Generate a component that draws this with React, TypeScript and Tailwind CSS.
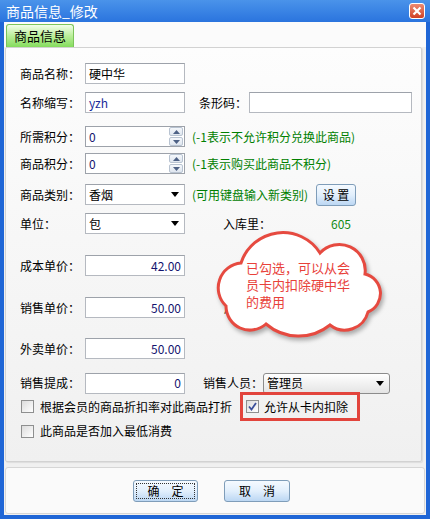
import React from 'react';

const font = { fontFamily: '"Noto Sans CJK SC", "Noto Sans", sans-serif' };

function TextBox({ value = '', right = false, w = 'w-[100px]', tone = 'text-black' }: { value?: string; right?: boolean; w?: string; tone?: string }) {
  return (
    <div
      className={`${w} h-[21px] bg-white border border-[#b5b9c0] border-t-[#9da2aa] flex items-center px-[3px] text-[12px] whitespace-nowrap ${tone} ${right ? 'justify-end' : ''}`}
    >
      {value}
    </div>
  );
}

function SpinBox({ value }: { value: string }) {
  return (
    <div className="w-[100px] h-[21px] bg-white border border-[#9da2aa] flex items-center text-[12px] text-[#14146e]">
      <span className="flex-1 pl-[3px]">{value}</span>
      <div className="w-[14px] h-[19px] flex flex-col gap-[1px] mr-[1px]">
        <div className="flex-1 bg-linear-to-b from-[#f4f7fb] to-[#dfe6ef] border border-[#b8c3d1] rounded-[2px] flex items-center justify-center">
          <svg width="7" height="4" viewBox="0 0 7 4"><path d="M3.5 0 L7 4 L0 4 Z" fill="#4d6185" /></svg>
        </div>
        <div className="flex-1 bg-linear-to-b from-[#f4f7fb] to-[#dfe6ef] border border-[#b8c3d1] rounded-[2px] flex items-center justify-center">
          <svg width="7" height="4" viewBox="0 0 7 4"><path d="M0 0 L7 0 L3.5 4 Z" fill="#4d6185" /></svg>
        </div>
      </div>
    </div>
  );
}

function ComboBox({ value, w = 'w-[100px]', fancy = false }: { value: string; w?: string; fancy?: boolean }) {
  return (
    <div
      className={`${w} h-[21px] flex items-center text-[12px] text-black pl-[3px] pr-[5px] whitespace-nowrap ${
        fancy
          ? 'bg-linear-to-b from-white to-[#e4e4e4] border border-[#8c8c8c] rounded-[3px]'
          : 'bg-white border border-[#b5b9c0] border-t-[#9da2aa]'
      }`}
    >
      <span className="flex-1">{value}</span>
      <svg width="8" height="5" viewBox="0 0 8 5"><path d="M0 0 L8 0 L4 5 Z" fill="#000" /></svg>
    </div>
  );
}

function CheckBox({ checked = false }: { checked?: boolean }) {
  return (
    <div className="w-[13px] h-[13px] border border-[#8e8f8f] bg-linear-to-br from-[#dcdcdc] to-white flex items-center justify-center shrink-0">
      {checked && (
        <svg width="9" height="9" viewBox="0 0 9 9">
          <path d="M1 4.5 L3.5 7.5 L8 1" stroke="#3b4f9a" strokeWidth="1.8" fill="none" />
        </svg>
      )}
    </div>
  );
}

function BlueButton({ label, w, h = 'h-[22px]', focus = false }: { label: string; w: string; h?: string; focus?: boolean }) {
  return (
    <div className={`${w} ${h} rounded-[3px] border border-[#7f9db9] bg-linear-to-b from-[#f5faff] via-[#e2effc] to-[#bcd7f3] flex items-center justify-center p-[2px]`}>
      <div className={`w-full h-full flex items-center justify-center text-[12px] text-black whitespace-nowrap ${focus ? 'border border-dotted border-[#333]' : ''}`}>
        {label}
      </div>
    </div>
  );
}

function Label({ text, w = 'w-[65px]' }: { text: string; w?: string }) {
  return <span className={`${w} shrink-0 text-[12px] text-black whitespace-nowrap`}>{text}</span>;
}

export default function App() {
  return (
    <div className="relative w-[430px] h-[519px] bg-[#1f66d6] flex flex-col overflow-hidden" style={font}>
      {/* Title bar */}
      <div className="h-[22px] flex items-center bg-linear-to-b from-[#4a93ea] to-[#2a74de] pl-[6px] pr-[5px]">
        <span className="flex-1 text-white text-[14px] leading-none">商品信息_修改</span>
        <div className="w-[16px] h-[16px] rounded-[3px] border border-white bg-linear-to-b from-[#ec8a72] to-[#cf3f22] flex items-center justify-center">
          <svg width="10" height="10" viewBox="0 0 10 10">
            <path d="M1.5 1.5 L8.5 8.5 M8.5 1.5 L1.5 8.5" stroke="#fff" strokeWidth="2.2" />
          </svg>
        </div>
      </div>

      {/* Body */}
      <div className="flex-1 mx-[4px] mb-[4px] bg-[#f0f0f0] flex flex-col">
        <div className="h-[25px] pt-[2px] pl-[2px] bg-[#fbfbfb]">
          <div className="w-[68px] h-[23px] rounded-t-[3px] border border-b-0 border-[#7cc45a] bg-linear-to-b from-[#f2fde9] via-[#b9ee98] to-[#84dc5c] flex items-center justify-center text-[13px] text-black">
            商品信息
          </div>
        </div>

        {/* Panel */}
        <div className="ml-[1px] w-[417px] h-[415px] border border-[#d2d2d2] rounded-[2px] bg-linear-to-b from-[#fdfdfd] to-[#f0f0f0] shadow-[1px_1px_1px_rgba(0,0,0,0.08)] pt-[15px] pl-[14px] flex flex-col">
          <div className="flex items-center h-[21px]">
            <Label text="商品名称：" />
            <TextBox value="硬中华" />
          </div>
          <div className="flex items-center h-[21px] mt-[8px]">
            <Label text="名称缩写：" />
            <TextBox value="yzh" tone="text-[#1a2a9a]" />
            <span className="ml-[14px] w-[50px] text-[12px] text-black whitespace-nowrap">条形码：</span>
            <TextBox w="w-[163px]" />
          </div>
          <div className="flex items-center h-[21px] mt-[13px]">
            <Label text="所需积分：" />
            <SpinBox value="0" />
            <span className="ml-[7px] text-[12px] text-[#008000] whitespace-nowrap">(-1表示不允许积分兑换此商品)</span>
          </div>
          <div className="flex items-center h-[21px] mt-[6px]">
            <Label text="商品积分：" />
            <SpinBox value="0" />
            <span className="ml-[7px] text-[12px] text-[#008000] whitespace-nowrap">(-1表示购买此商品不积分)</span>
          </div>
          <div className="flex items-center h-[21px] mt-[10px]">
            <Label text="商品类别：" />
            <ComboBox value="香烟" />
            <span className="ml-[7px] w-[124px] text-[12px] text-[#008000] whitespace-nowrap">(可用键盘输入新类别)</span>
            <BlueButton label="设 置" w="w-[40px]" />
          </div>
          <div className="flex items-center h-[21px] mt-[8px]">
            <Label text="单位：" />
            <ComboBox value="包" />
            <span className="ml-[38px] w-[108px] text-[12px] text-black whitespace-nowrap">入库里：</span>
            <span className="text-[12px] text-[#138a13]">605</span>
          </div>
          <div className="flex items-center h-[21px] mt-[21px]">
            <Label text="成本单价：" />
            <TextBox value="42.00" right tone="text-[#14146e]" />
          </div>
          <div className="flex items-center h-[21px] mt-[21px]">
            <Label text="销售单价：" />
            <TextBox value="50.00" right tone="text-[#14146e]" />
            <span className="ml-[39px] text-[12px] text-black whitespace-nowrap">库存量：</span>
          </div>
          <div className="flex items-center h-[21px] mt-[20px]">
            <Label text="外卖单价：" />
            <TextBox value="50.00" right tone="text-[#14146e]" />
          </div>
          <div className="flex items-center h-[22px] mt-[13px]">
            <Label text="销售提成：" />
            <TextBox value="0" right tone="text-[#14146e]" />
            <span className="ml-[18px] w-[60px] text-[12px] text-black whitespace-nowrap">销售人员：</span>
            <ComboBox value="管理员" w="w-[127px]" fancy />
          </div>
          <div className="flex items-center h-[29px] mt-[-2px]">
            <div className="ml-[1px] mr-[6px]">
              <CheckBox />
            </div>
            <span className="text-[12px] text-black w-[200px] whitespace-nowrap">根据会员的商品折扣率对此商品打折</span>
            <div className="h-[29px] w-[120px] border-[3px] border-[#e2443c] flex items-center pl-[3px]">
              <CheckBox checked />
              <span className="ml-[5px] text-[12px] text-black whitespace-nowrap">允许从卡内扣除</span>
            </div>
          </div>
          <div className="flex items-center h-[20px]">
            <div className="ml-[1px] mr-[6px]">
              <CheckBox />
            </div>
            <span className="text-[12px] text-black whitespace-nowrap">此商品是否加入最低消费</span>
          </div>
        </div>

        {/* Buttons */}
        <div className="mt-[5px] ml-[1px] w-[420px] h-[47px] border border-[#d6d6d6] rounded-[3px] bg-[#fafafa] flex items-center pl-[127px] gap-[26px]">
          <BlueButton label="确　定" w="w-[65px]" focus />
          <BlueButton label="取　消" w="w-[66px]" />
        </div>
      </div>

      {/* Cloud callout */}
      <div className="absolute left-[214px] top-[231px] w-[172px] h-[108px]">
        <svg width="172" height="108" viewBox="0 0 172 108" className="drop-shadow-[2px_3px_2px_rgba(0,0,0,0.3)]">
          <path
            d="M12 75 A25 25 0 0 1 27 32 A44 44 0 0 1 106 22 A26 26 0 0 1 151 43 A20 20 0 0 1 154 81 A24 24 0 0 1 116 94 A50 50 0 0 1 52 93 A24 24 0 0 1 12 75 Z"
            fill="#fff"
            stroke="#e64a40"
            strokeWidth="3"
          />
        </svg>
        <div className="absolute left-[32px] top-[28px] w-[108px] text-[13px] leading-[17px] text-[#e8413a]">
          已勾选，可以从会员卡内扣除硬中华的费用
        </div>
      </div>
    </div>
  );
}
